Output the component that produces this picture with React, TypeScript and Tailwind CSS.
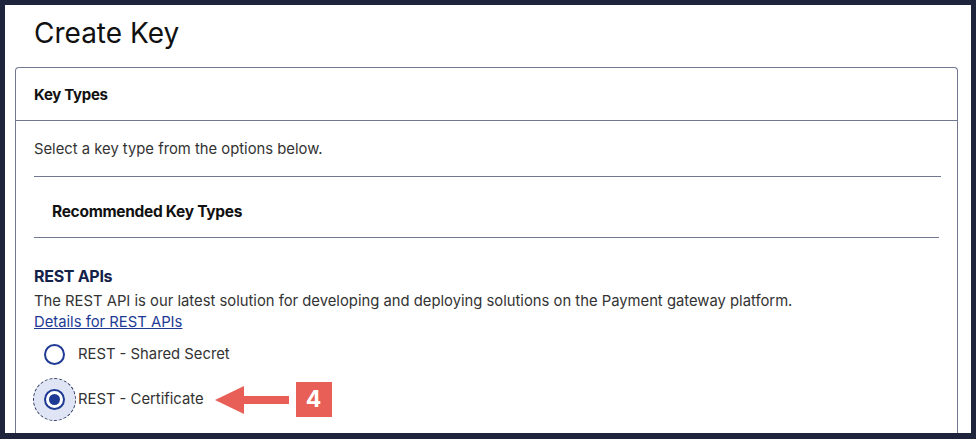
import React from 'react';

function Radio({ checked, focused, label }: { checked?: boolean; focused?: boolean; label: string }) {
  return (
    <label className="flex items-center h-[43px]">
      <span className="relative w-[43px] h-[43px] flex items-center justify-center">
        {focused && (
          <span className="absolute inset-0 rounded-full bg-[#dfe5f5] border border-dashed border-[#2b3357]" />
        )}
        <span className="relative w-[21px] h-[21px] rounded-full border-2 border-[#1e3a94] bg-white flex items-center justify-center">
          {checked && <span className="w-[11px] h-[11px] rounded-full bg-[#1e3a94]" />}
        </span>
      </span>
      <span className="ml-[2px] text-[14.8px] text-[#333]">{label}</span>
    </label>
  );
}

function Callout({ n }: { n: number }) {
  return (
    <div className="flex items-center ml-[11px]">
      <svg width="76" height="30" viewBox="0 0 76 30">
        <polygon points="0,15 29,1 29,11 74,11 74,19 29,19 29,29" fill="#e85f58" />
      </svg>
      <div className="ml-[5px] w-[36px] h-[35px] bg-[#e85f58] text-white font-bold text-[23px] flex items-center justify-center">
        {n}
      </div>
    </div>
  );
}

export default function App() {
  return (
    <div className="w-[976px] h-[439px] bg-[#1e243c] pt-[5px] px-[5px] pb-[6px] overflow-hidden" style={{ fontFamily: 'Inter, "Noto Sans", sans-serif' }}>
      <div className="bg-white h-full overflow-hidden pl-[10px] pr-[13px]">
        <h1 className="text-[28px] text-[#111] pl-[19px] pt-[9px] h-[62px] leading-[38px]">Create Key</h1>
        <div className="border border-[#6f7791] rounded-t-[4px] border-b-0 h-[400px]">
          <div className="h-[53px] flex items-center px-[18px] pt-[3px] border-b border-[#6f7791]">
            <h2 className="text-[15px] font-bold text-[#111] tracking-[-0.3px]">Key Types</h2>
          </div>
          <div className="pl-[18px] pr-[16px]">
            <p className="text-[14.8px] text-[#333] pt-[17px] h-[55px]">Select a key type from the options below.</p>
            <div className="border-t border-[#6f7791] h-[61px] flex items-center pl-[18px] pt-[10px]">
              <h3 className="text-[15.5px] font-bold text-[#111] tracking-[-0.3px]">Recommended Key Types</h3>
            </div>
            <div className="border-t border-[#6f7791] mr-[2px]" />
            <div className="pt-[27px]">
              <h4 className="text-[16px] font-bold text-[#14224a] leading-[22px] tracking-[-0.3px]">REST APIs</h4>
              <p className="text-[14.8px] text-[#333] leading-[22px] mt-[3px]">
                The REST API is our latest solution for developing and deploying solutions on the Payment gateway platform.
              </p>
              <a href="#" className="text-[14.8px] text-[#1e3a94] underline leading-[20px] block w-fit">Details for REST APIs</a>
              <div className="-ml-[1px] mt-[1px]">
                <Radio label="REST - Shared Secret" />
                <div className="flex items-center mt-[2px]">
                  <Radio checked focused label="REST - Certificate" />
                  <Callout n={4} />
                </div>
              </div>
            </div>
          </div>
        </div>
      </div>
    </div>
  );
}
